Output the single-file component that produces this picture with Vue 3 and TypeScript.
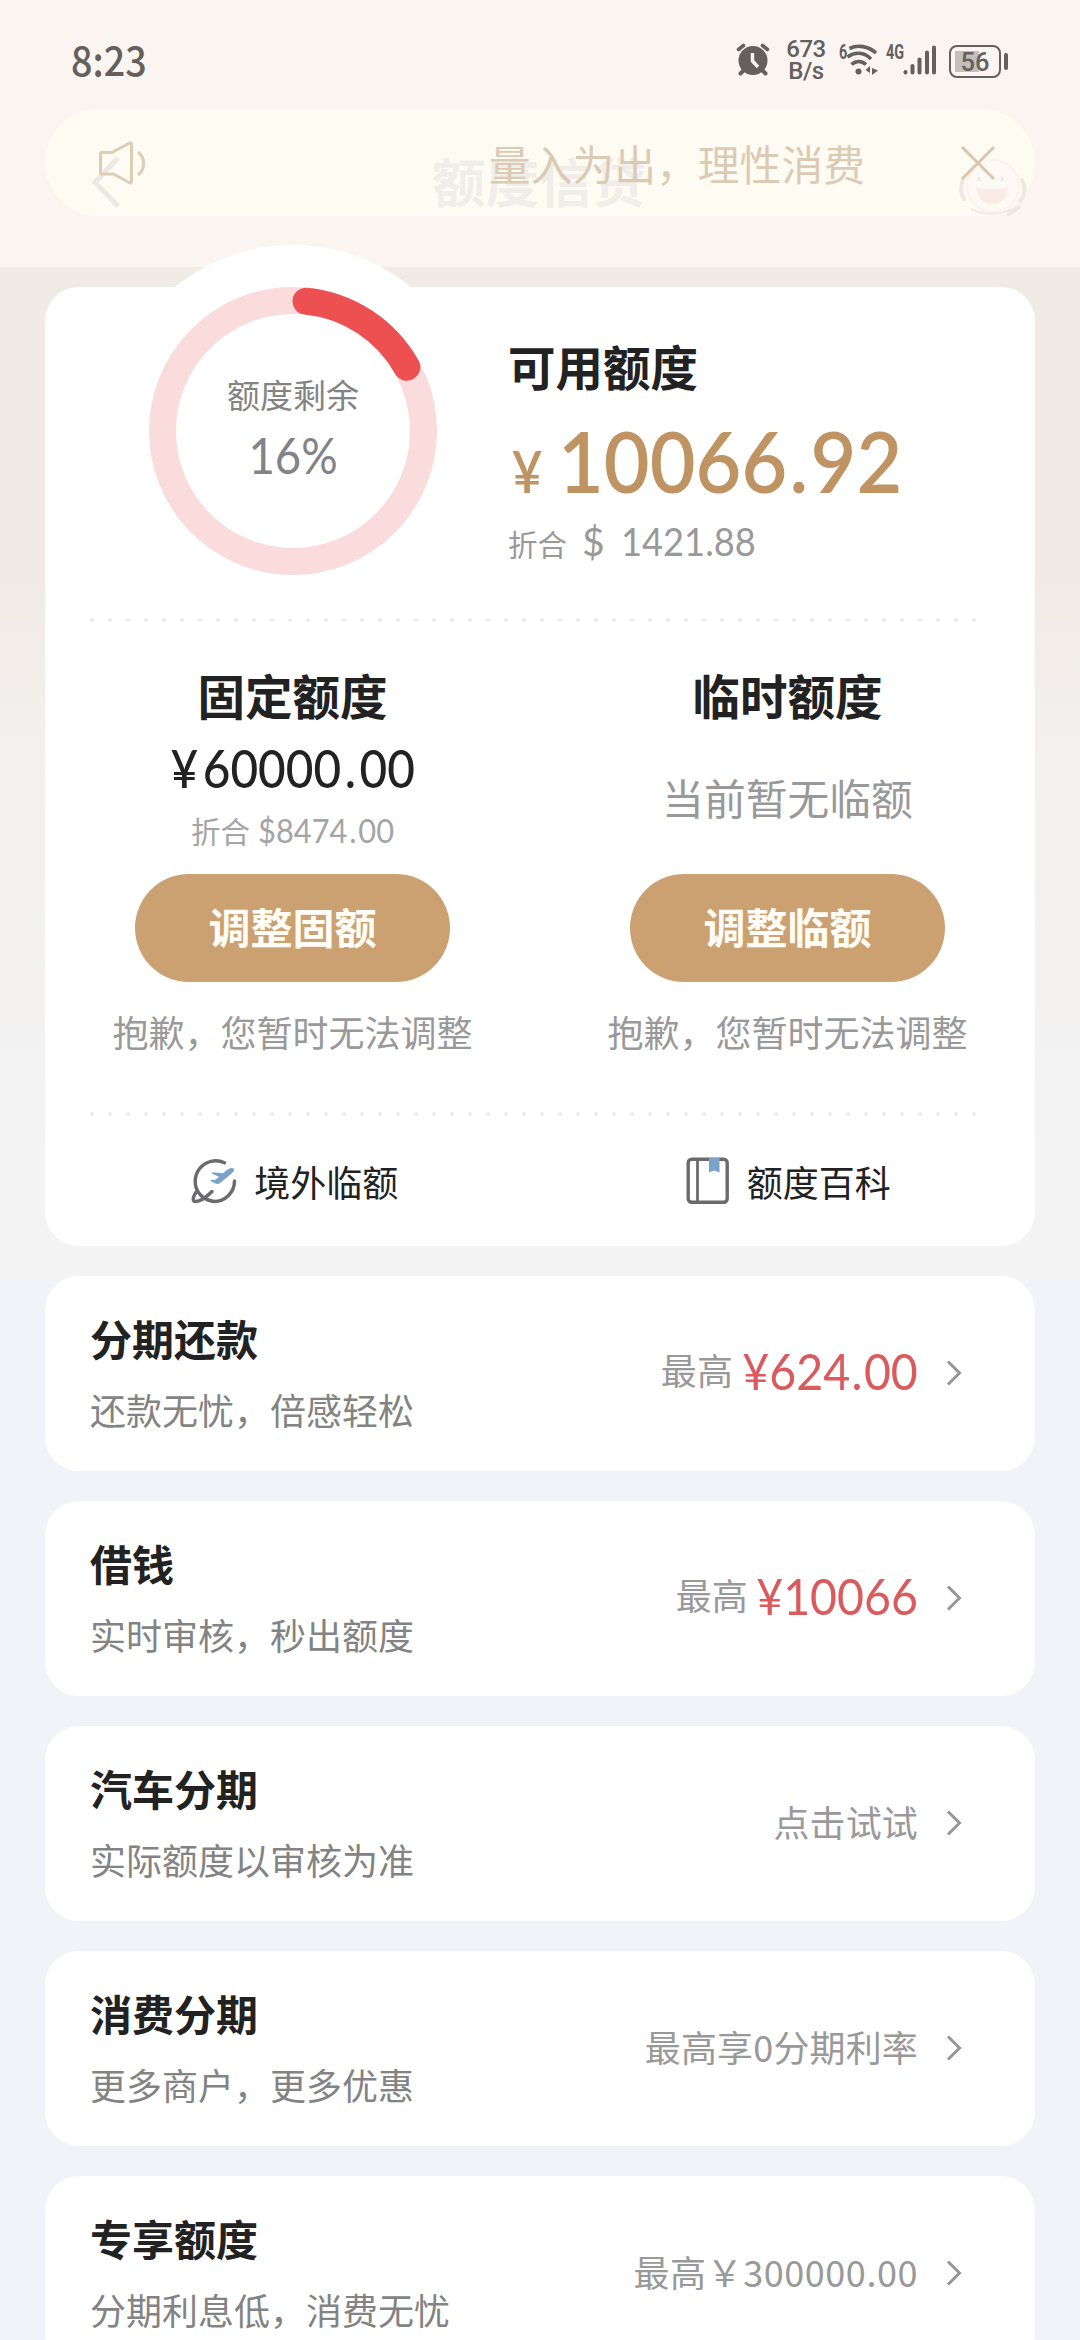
<script setup lang="ts">
interface Offer {
  title: string
  desc: string
  hint: string
  whole?: string
  fraction?: string
}

const offers: Offer[] = [
  { title: '分期还款', desc: '还款无忧，倍感轻松', hint: '最高', whole: '624', fraction: '00' },
  { title: '借钱', desc: '实时审核，秒出额度', hint: '最高', whole: '10066' },
  { title: '汽车分期', desc: '实际额度以审核为准', hint: '点击试试' },
  { title: '消费分期', desc: '更多商户，更多优惠', hint: '最高享0分期利率' },
  { title: '专享额度', desc: '分期利息低，消费无忧', hint: '最高￥300000.00' },
]

const ringRadius = 130.5
const point = (deg: number): string => {
  const a = (deg * Math.PI) / 180
  return `${(144 + ringRadius * Math.sin(a)).toFixed(2)} ${(144 - ringRadius * Math.cos(a)).toFixed(2)}`
}
const arc = `M${point(5.7)}A${ringRadius} ${ringRadius} 0 0 1 ${point(60.7)}`
</script>

<template>
  <div class="page">
    <header class="header">
      <div class="status">
        <span class="clock">8:23</span>
        <div class="status-icons">
          <svg class="alarm" width="34" height="34" viewBox="0 0 34 34">
            <path d="M7.500 27.500 4.500 30.500M26.500 27.500 29.500 30.500" stroke="#655f5d" stroke-width="4" stroke-linecap="round" />
            <path d="M2.500 6.500 7.500 2.500M31.500 6.500 26.500 2.500" stroke="#655f5d" stroke-width="3.600" stroke-linecap="round" />
            <circle cx="17" cy="17.500" r="14.500" fill="#655f5d" />
            <path d="M16.500 10V18L22 24" fill="none" stroke="#faf5f1" stroke-width="3.400" />
          </svg>
          <div class="speed"><span>673</span><span>B/s</span></div>
          <svg class="wifi" width="40" height="36" viewBox="0 0 40 36">
            <text x="0" y="16.500" class="tiny" transform="scale(0.720 1)">6</text>
            <g fill="none" stroke="#655f5d" stroke-width="3.600">
              <path d="M10.500 6.500C19 2.500 29 4 37 11" />
              <path d="M8.500 15C16 9.500 25 10 32 17" />
              <path d="M12.500 22.500C17 18.500 22.500 18.500 27 22.500" />
            </g>
            <circle cx="19.500" cy="29.500" r="3" fill="#655f5d" />
            <path d="M31 24V31L26.500 28ZM33 26V33L39 28.500Z" fill="#655f5d" />
          </svg>
          <svg class="signal" width="52" height="36" viewBox="0 0 52 36">
            <text x="0" y="16.500" class="tiny" transform="scale(0.720 1)">4G</text>
            <path d="M19.500 30V30.500M26.500 24V30.500M33.500 17.500V30.500M41 10.500V30.500M48 5.500V30.500" stroke="#655f5d" stroke-width="4" stroke-linecap="round" />
          </svg>
          <div class="battery"><div class="cell"><span>56</span></div><i></i></div>
        </div>
      </div>

      <div class="banner">
        <svg class="back" width="30" height="56" viewBox="0 0 30 56"><path d="M27 3 4 27.500 27 51" fill="none" stroke="#ece8e3" stroke-width="5" /></svg>
        <span class="nav-title">额度信贷</span>
        <svg class="mascot" width="72" height="66" viewBox="0 0 72 66">
          <circle cx="36" cy="35" r="26" fill="#fdf9f4" stroke="#faf3ec" stroke-width="2" />
          <path d="M6 29C3 35 4 44 7 48M65 29C69 36 68 45 63 50M52 63 62 56" fill="none" stroke="#ece8e3" stroke-width="4" stroke-linecap="round" />
          <path d="M19 36C29 39 41 39 51 36C51 48 43 53 35 53C26 53 20 47 19 36Z" fill="#faebe4" />
          <path d="M22 26v4M45 26v4" stroke="#eeeae5" stroke-width="3" />
          <path d="M14 58C27 64 42 64 55 58" stroke="#f6e9e2" fill="none" stroke-width="2" />
        </svg>
        <svg class="speaker" width="50" height="48" viewBox="0 0 50 48">
          <path d="M3 13.500H14L31.500 4Q33.500 3 33.500 5.500V42Q33.500 45 31 43.500L15.500 35H3Q2.500 35 2.500 34V14.500Z" fill="none" stroke="#ddcdb5" stroke-width="3" stroke-linejoin="round" />
          <path d="M40 13C47.500 19 47.500 30 40 36" fill="none" stroke="#ddcdb5" stroke-width="3" />
        </svg>
        <span class="slogan">量入为出，理性消费</span>
        <svg class="close" width="36" height="36" viewBox="0 0 36 36"><path d="M2 2 34 34M34 2 2 34" stroke="#dcc5aa" stroke-width="3" /></svg>
      </div>
    </header>

    <main class="body">
      <section class="card limit">
        <div class="bulge"></div>
        <div class="overview">
          <div class="ring">
            <svg width="288" height="288" viewBox="0 0 288 288">
              <circle cx="144" cy="144" :r="ringRadius" fill="none" stroke="#fadcdd" stroke-width="27" />
              <path :d="arc" fill="none" stroke="#ed5050" stroke-width="27" stroke-linecap="round" />
            </svg>
            <div class="ring-text">
              <span class="ring-label">额度剩余</span>
              <span class="ring-value">16%</span>
            </div>
          </div>
          <div class="available">
            <h2 class="heading">可用额度</h2>
            <div class="amount"><span class="yen">¥</span><span class="figure">10066<span class="dot">.</span>92</span></div>
            <div class="convert"><span>折合</span><b class="usd">$</b><b class="figure">1421.88</b></div>
          </div>
        </div>

        <div class="dots"></div>

        <div class="columns">
          <div class="column">
            <h2 class="heading">固定额度</h2>
            <div class="fixed"><span class="yen">¥</span>60000<span class="dot">.</span>00</div>
            <div class="fixed-convert"><span>折合</span><b>$8474<span class="dot">.</span>00</b></div>
            <button class="adjust">调整固额</button>
            <p class="sorry">抱歉，您暂时无法调整</p>
          </div>
          <div class="column">
            <h2 class="heading">临时额度</h2>
            <p class="empty">当前暂无临额</p>
            <button class="adjust">调整临额</button>
            <p class="sorry">抱歉，您暂时无法调整</p>
          </div>
        </div>

        <div class="dots"></div>

        <div class="links">
          <div class="link">
            <svg width="46" height="48" viewBox="0 0 46 48">
              <path d="M33.500 5.800A20.500 20.500 0 0 0 9 37.500Q14 43 23 44.500A20.500 20.500 0 0 0 43.500 24" fill="none" stroke="#6b6b6d" stroke-width="3.400" stroke-linecap="round" />
              <path d="M6 34C1.500 40 1 44.500 4.500 44.500C9 44.500 16 39.500 21 34.500" fill="none" stroke="#6b6b6d" stroke-width="3.400" stroke-linecap="round" />
              <path d="M42.800 11.600C41.200 10.200 38.500 11 36 13L32 16.300 21.500 15.200 20.500 16.500 28 19.700 24.500 22.800 20 22.800 19.500 24 24.500 26.500C27 27.500 29 26.500 31 24.500L40 17C42.500 15 44 12.800 42.800 11.600Z" fill="#7ba3ca" />
            </svg>
            <span>境外临额</span>
          </div>
          <div class="link">
            <svg width="44" height="48" viewBox="0 0 44 48">
              <rect x="2.200" y="2.200" width="39" height="43" rx="3.500" fill="none" stroke="#6b6b6d" stroke-width="3.400" />
              <path d="M11.500 2V45" stroke="#6b6b6d" stroke-width="2.800" />
              <path d="M23 1H33.500V15.500L28.200 13.500 23 15.500Z" fill="#7ba3ca" />
            </svg>
            <span>额度百科</span>
          </div>
        </div>
      </section>

      <section v-for="offer in offers" :key="offer.title" class="card offer">
        <div class="offer-main">
          <h3>{{ offer.title }}</h3>
          <p>{{ offer.desc }}</p>
        </div>
        <div class="offer-side">
          <span class="hint" :class="{ raised: offer.whole, wide: offer.hint.includes('￥') }">{{ offer.hint }}</span>
          <span v-if="offer.whole" class="price">¥{{ offer.whole }}<template v-if="offer.fraction"><span class="dot">.</span>{{ offer.fraction }}</template></span>
        </div>
        <svg class="chevron" width="18" height="28" viewBox="0 0 18 28"><path d="M3 2.500 14.500 14 3 25.500" fill="none" stroke="#969696" stroke-width="3" /></svg>
      </section>
    </main>
  </div>
</template>

<style>
body {
  margin: 0;
  overflow: hidden;
}
</style>

<style scoped>
.page {
  width: 1080px;
  height: 2340px;
  overflow: hidden;
  font-family: "Noto Sans CJK SC", sans-serif;
  color: #222;
  background: #f2f3f9;
}
h2, h3, p { margin: 0; }
.header {
  height: 267px;
  background: #faf5f1;
}
.status {
  height: 109px;
  display: flex;
  justify-content: space-between;
  box-sizing: border-box;
  padding: 0 72px 0 71px;
  color: #655f5d;
}
.clock {
  font-size: 41px;
  line-height: 56px;
  margin-top: 30px;
  font-weight: 500;
  transform: scaleX(0.920);
  transform-origin: left;
}
.status-icons {
  display: flex;
  align-items: flex-start;
}
.alarm { margin-top: 43px; }
.speed {
  width: 42px;
  margin: 39px 0 0 15px;
  display: flex;
  flex-direction: column;
  align-items: center;
  font: 500 24px/21.500px Roboto, sans-serif;
  letter-spacing: -0.500px;
}
.wifi { margin: 42px 0 0 12px; }
.signal { margin: 42px 0 0 7px; }
.tiny {
  font: 700 20px Roboto, sans-serif;
  fill: #655f5d;
}
.battery {
  display: flex;
  align-items: center;
  margin: 45px 0 0 11px;
  gap: 3px;
}
.cell {
  width: 52px;
  height: 33px;
  box-sizing: border-box;
  border: 2.500px solid #655f5d;
  border-radius: 8px;
  display: flex;
  align-items: center;
  justify-content: center;
  background: linear-gradient(#c4bfbc, #c4bfbc) 3.500px 3.500px / 24px 21px no-repeat;
  font: 500 25.500px/28px Roboto, sans-serif;
}
.battery i {
  width: 4px;
  height: 17px;
  border-radius: 2px;
  background: #655f5d;
}
.banner {
  position: relative;
  height: 107px;
  margin: 0 45px;
  box-sizing: border-box;
  padding: 0 39px 0 53px;
  border-radius: 54px;
  background: #fefbf3;
  display: flex;
  align-items: center;
}
.back { position: absolute; left: 46px; top: 46px; }
.nav-title {
  position: absolute;
  left: 387px;
  top: 36px;
  font-size: 53.500px;
  line-height: 70px;
  font-weight: 700;
  color: #f1eee9;
}
.mascot { position: absolute; left: 912px; top: 42px; }
.speaker { position: relative; }
.slogan {
  position: relative;
  margin-left: auto;
  margin-right: 95px;
  font-size: 41.800px;
  line-height: 60px;
  color: #dccbb4;
}
.close { position: relative; }

.body {
  height: 2073px;
  padding: 20px 45px 0;
  background: linear-gradient(180deg, #f0ebe5 0, #f0ebe5 30%, #f3efec 45%, #f3f3f3 80%, #f4f4f4 100%) 0 0 / 100% 1013px no-repeat;
}
.card {
  border-radius: 34px;
  background: #fff;
}
.limit {
  position: relative;
  height: 959px;
}
.bulge {
  position: absolute;
  left: 61px;
  top: -42px;
  width: 374px;
  height: 374px;
  border-radius: 50%;
  background: #fff;
}
.overview {
  position: relative;
  height: 331px;
  display: flex;
}
.ring {
  position: relative;
  margin-left: 104px;
  width: 288px;
  height: 288px;
}
.ring svg { display: block; }
.ring-text {
  position: absolute;
  inset: 0;
  display: flex;
  flex-direction: column;
  align-items: center;
  padding-top: 83px;
}
.ring-label {
  font-size: 33px;
  line-height: 48px;
  color: #838383;
}
.ring-value {
  font: 400 50px/60px Lato, sans-serif;
  transform: scaleX(0.910);
  margin-top: 7px;
  color: #818387;
}
.available { margin-left: 71px; padding-top: 49px; }
.heading {
  font-size: 47.500px;
  line-height: 60px;
  font-weight: 700;
}
.figure {
  transform: scaleX(0.930);
  transform-origin: left;
}
.amount {
  display: flex;
  align-items: baseline;
  height: 90px;
  margin-top: 19px;
  font: 600 85px/90px Lato, sans-serif;
  color: #bf9462;
}
.amount .yen {
  width: 46px;
  padding-left: 4px;
  font-size: 57px;
  transform: scaleX(0.930);
  transform-origin: left;
}
.amount .dot { margin: 0 2.500px; }
.convert {
  display: flex;
  align-items: baseline;
  height: 40px;
  margin-top: 16px;
  font-size: 29.500px;
  line-height: 40px;
  color: #999;
}
.convert b, .fixed-convert b {
  font-family: Lato, sans-serif;
  font-weight: 400;
}
.convert b { font-size: 39px; }
.convert .usd { margin: 0 16px 0 15px; }
.dots {
  height: 4px;
  margin: 0 0 0 38px;
  width: 900px;
  background: radial-gradient(circle, #ececec 1.800px, transparent 2.200px) 0 0 / 18px 4px;
}
.columns {
  display: flex;
  height: 490px;
}
.column {
  flex: 1;
  display: flex;
  flex-direction: column;
  align-items: center;
  padding-top: 43px;
}
.fixed {
  display: flex;
  height: 60px;
  margin-top: 13px;
  font: 500 53px/60px Lato, sans-serif;
  transform: scaleX(0.900);
}
.fixed .yen { margin-right: 5px; }
.fixed .dot { margin: 0 4px; }
.fixed-convert {
  display: flex;
  align-items: baseline;
  height: 40px;
  margin-top: 12px;
  font-size: 29.500px;
  line-height: 40px;
  color: #a4a4a4;
}
.fixed-convert b {
  margin: 0 -12px 0 8px;
  font-size: 33.500px;
  transform: scaleX(0.920);
  transform-origin: left;
}
.fixed-convert .dot { margin: 0 2px; }
.empty {
  height: 60px;
  margin-top: 42px;
  margin-bottom: 23px;
  font-size: 41.800px;
  line-height: 60px;
  color: #999;
}
.adjust {
  width: 315px;
  height: 108px;
  margin: 24px 0 0;
  padding: 0 0 4px;
  border: 0;
  border-radius: 54px;
  background: #cca172;
  color: #fffdf6;
  font: 700 42px/60px "Noto Sans CJK SC", sans-serif;
}
.sorry {
  margin-top: 23px;
  font-size: 36px;
  line-height: 52px;
  color: #999;
}
.links { display: flex; padding-left: 3px; }
.link {
  flex: 1;
  display: flex;
  align-items: center;
  justify-content: center;
  gap: 17px;
  padding: 39px 0 0;
  font-size: 36px;
  line-height: 52px;
}
.offer {
  display: flex;
  height: 195px;
  margin-top: 30px;
  box-sizing: border-box;
  padding: 0 72px 0 45px;
}
.offer-main { flex: 1; padding-top: 32px; }
.offer-main h3 { font-size: 42px; line-height: 60px; font-weight: 700; }
.offer-main p { font-size: 36px; line-height: 52px; margin-top: 15px; color: #838383; }
.offer-side {
  display: flex;
  align-items: flex-start;
  height: 60px;
  margin-top: 65px;
  line-height: 60px;
}
.hint { font-size: 36px; color: #999; letter-spacing: 0.150px; }
.raised { margin-top: -2px; }
.wide { letter-spacing: 0.550px; }
.price {
  margin-left: -4px;
  font: 400 50px/60px Lato, sans-serif;
  transform: scaleX(0.930);
  transform-origin: right;
  color: #d95b5d;
}
.price .dot { margin: 0 1.500px; }
.chevron { margin: 83px 0 0 27px; }
</style>
